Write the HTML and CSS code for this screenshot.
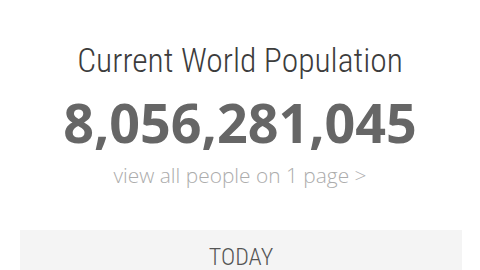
FILE: index.html
```html
<!DOCTYPE html>
<html>
<head>
<meta charset="utf-8">
<link rel="stylesheet" href="styles.css">
</head>
<body>
<div class="page">
  <h1 class="title">Current World Population</h1>
  <div class="count">8,056,281,045</div>
  <a class="link" href="#">view all people on 1 page &gt;</a>
  <div class="today"><span class="today-label">TODAY</span></div>
</div>
</body>
</html>
```
FILE: styles.css
```css
html, body {
  margin: 0;
  padding: 0;
  background: #ffffff;
  overflow: hidden;
}
.page {
  display: flex;
  flex-direction: column;
  align-items: center;
  padding-top: 41px;
}
.title {
  margin: 0;
  font-family: "Roboto Condensed", Roboto, "Liberation Sans", sans-serif;
  font-stretch: condensed;
  font-weight: 300;
  font-size: 33.5px;
  line-height: 40px;
  color: #3c3c3c;
  white-space: nowrap;
}
.count {
  margin-top: 13px;
  font-family: "Open Sans", "Liberation Sans", sans-serif;
  font-weight: 700;
  font-size: 53.8px;
  line-height: 56px;
  color: #666666;
  white-space: nowrap;
}
.link {
  margin-top: 12px;
  font-family: "Open Sans", "Liberation Sans", sans-serif;
  font-weight: 300;
  font-size: 20.9px;
  line-height: 26px;
  color: #acacac;
  text-decoration: none;
  white-space: nowrap;
}
.today {
  box-sizing: border-box;
  align-self: stretch;
  margin: 42px 18px 0 20px;
  padding-top: 12px;
  height: 40px;
  background: #f4f4f4;
  text-align: center;
}
.today-label {
  font-family: "Roboto Condensed", Roboto, "Liberation Sans", sans-serif;
  font-stretch: condensed;
  font-weight: 300;
  font-size: 24px;
  line-height: 30px;
  color: #555555;
}
```
